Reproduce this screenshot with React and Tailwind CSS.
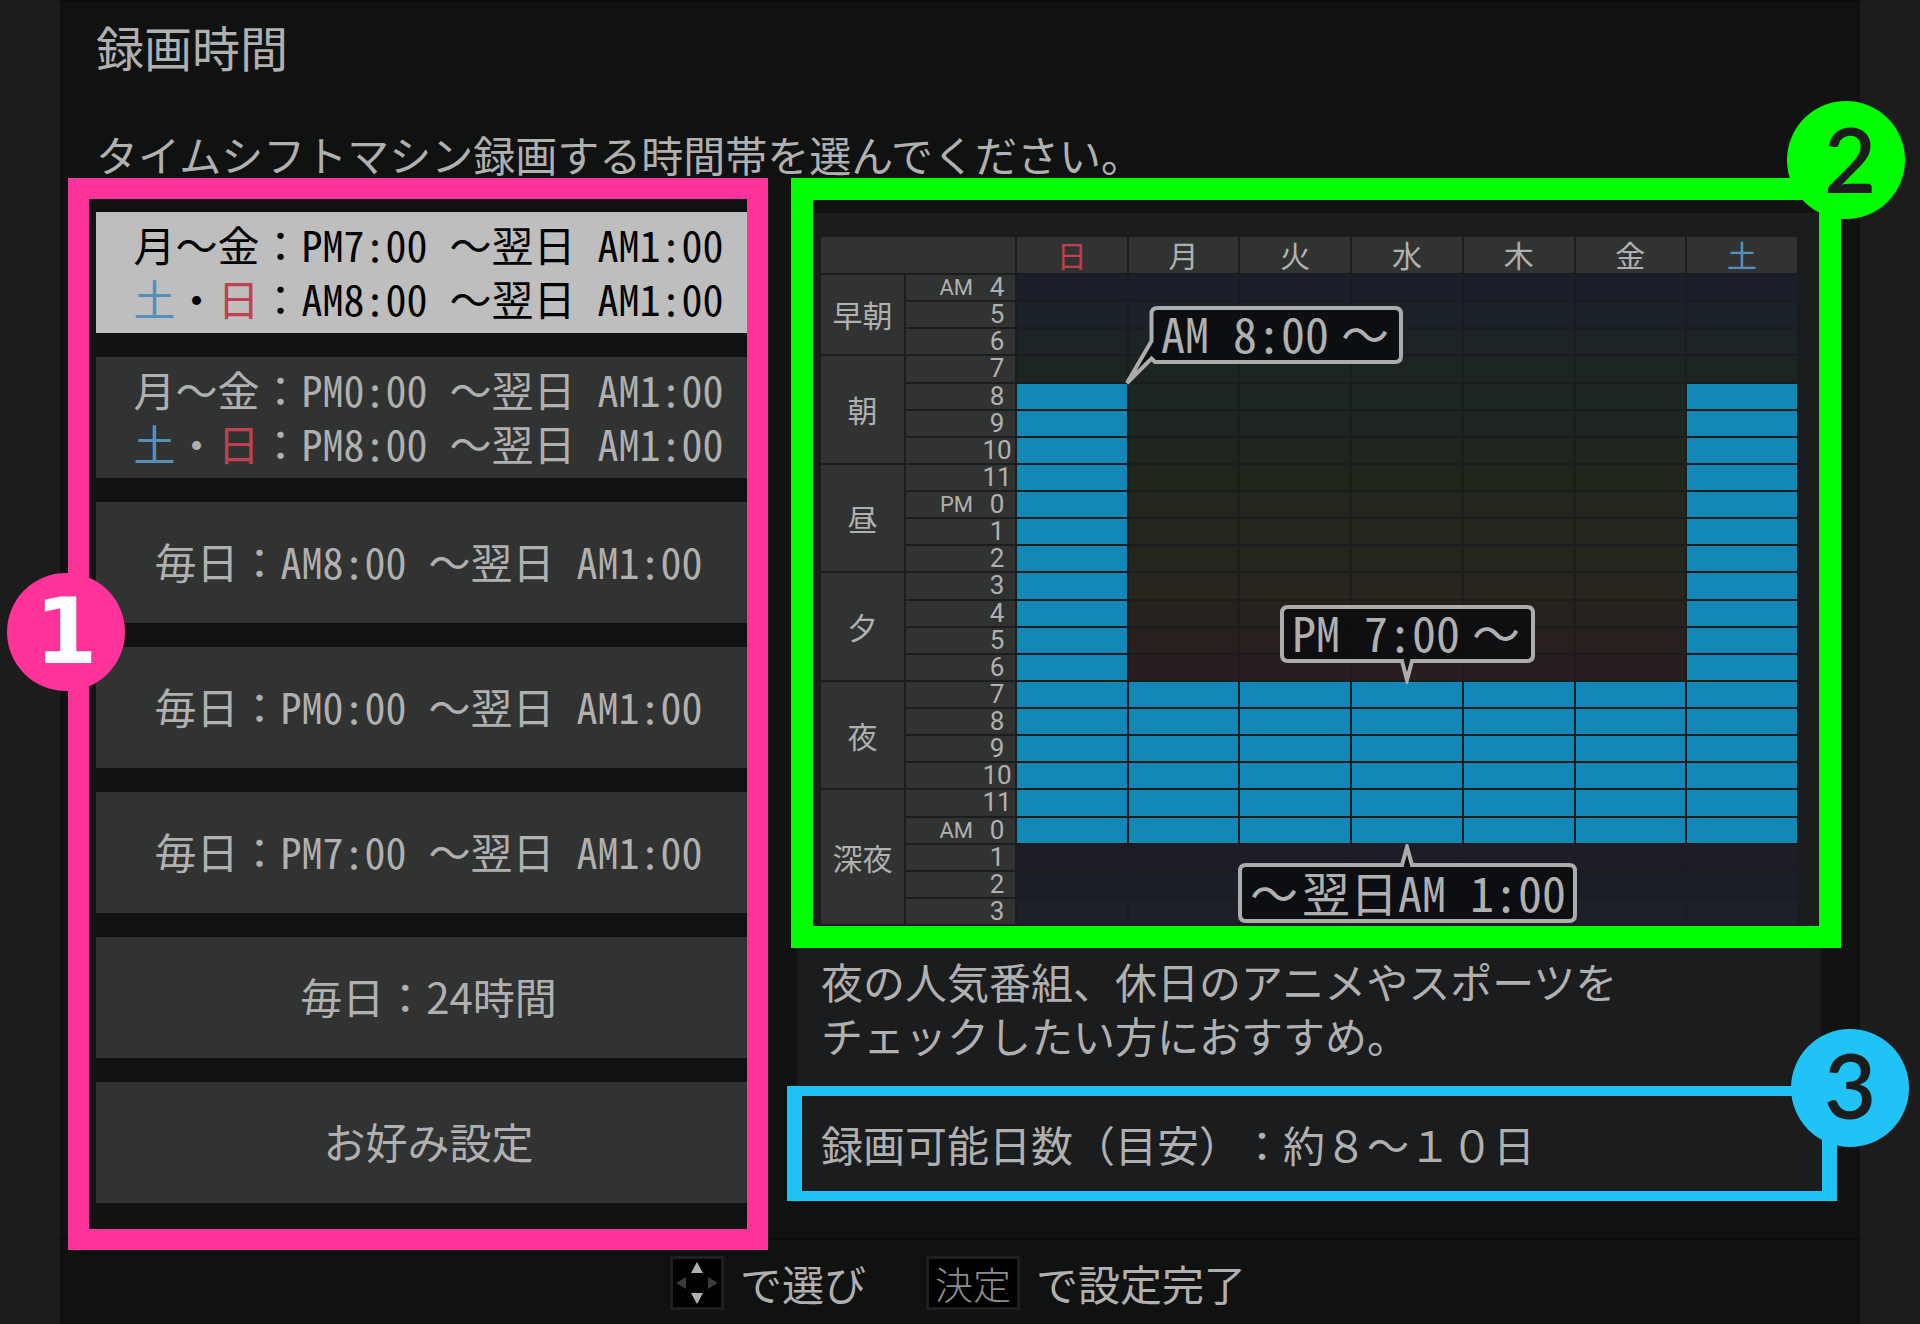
import React, { useState } from "react";

const days = [
  { label: "日", color: "text-[#c0404f]", weekend: true },
  { label: "月", color: "", weekend: false },
  { label: "火", color: "", weekend: false },
  { label: "水", color: "", weekend: false },
  { label: "木", color: "", weekend: false },
  { label: "金", color: "", weekend: false },
  { label: "土", color: "text-[#5590bb]", weekend: true },
];

const hours = [
  { hour: 4, half: "AM", period: "早朝", span: 3, bg: "bg-[#1c1f29]" },
  { hour: 5, bg: "bg-[#1c222a]" },
  { hour: 6, bg: "bg-[#1c2427]" },
  { hour: 7, period: "朝", span: 4, bg: "bg-[#1c2524]" },
  { hour: 8, bg: "bg-[#1d2623]" },
  { hour: 9, bg: "bg-[#1d2621]" },
  { hour: 10, bg: "bg-[#1f261e]" },
  { hour: 11, period: "昼", span: 4, bg: "bg-[#21261d]" },
  { hour: 0, half: "PM", bg: "bg-[#23261d]" },
  { hour: 1, bg: "bg-[#24251d]" },
  { hour: 2, bg: "bg-[#26251d]" },
  { hour: 3, period: "夕", span: 4, bg: "bg-[#28241e]" },
  { hour: 4, bg: "bg-[#28221e]" },
  { hour: 5, bg: "bg-[#281f1f]" },
  { hour: 6, bg: "bg-[#291e1f]" },
  { hour: 7, period: "夜", span: 4, bg: "bg-[#291e1f]" },
  { hour: 8, bg: "bg-[#291e1f]" },
  { hour: 9, bg: "bg-[#291e1f]" },
  { hour: 10, bg: "bg-[#291e1f]" },
  { hour: 11, period: "深夜", span: 5, bg: "bg-[#1c1d26]" },
  { hour: 0, half: "AM", bg: "bg-[#1c1d26]" },
  { hour: 1, bg: "bg-[#1c1d26]" },
  { hour: 2, bg: "bg-[#1c1e27]" },
  { hour: 3, bg: "bg-[#1c2028]" },
];

// row indexes that are recorded (last one included)
const WEEKEND_START = 4;
const WEEKDAY_START = 15;
const RECORD_END = 20;

const presets = [
  { id: "prime", split: true, weekday: "PM7:00", weekend: "AM8:00" },
  { id: "noon", split: true, weekday: "PM0:00", weekend: "PM8:00" },
  { id: "daily-am8", daily: "AM8:00" },
  { id: "daily-pm0", daily: "PM0:00" },
  { id: "daily-pm7", daily: "PM7:00" },
  { id: "daily-24", text: "毎日：24時間" },
  { id: "custom", text: "お好み設定" },
];

export default function App() {
  const [selected, setSelected] = useState("prime");

  return (
    <div className="min-h-screen bg-[#1c1c1c] px-[60px] font-['Noto_Sans_CJK_JP',sans-serif] text-[#b0b0b0] [text-spacing-trim:space-all]">
      <main className="flex min-h-screen flex-col border-t-2 border-[#0b0c0c] bg-[#101211]">
        <h1 className="pt-3 pl-9 text-[48px] leading-[64px]">録画時間</h1>
        <p className="pt-[52px] pl-9 text-[42px] leading-[48px]">
          タイムシフトマシン録画する時間帯を選んでください。
        </p>

        <div className="grid grid-cols-[2fr_3fr] items-start gap-[23px] pr-[19px] pl-2">
          {/* PRESET LIST */}
          <section className="relative z-10 flex flex-col gap-6 border-[21px] border-[#ff3399] pt-[13px] pb-[26px] pl-[7px]">
            {presets.map((preset) => (
              <PresetButton
                key={preset.id}
                preset={preset}
                active={selected === preset.id}
                onSelect={() => setSelected(preset.id)}
              />
            ))}
            <Badge className="top-[374px] -left-[82px] bg-[#ff3399] font-['DejaVu_Sans',sans-serif] font-bold text-white">
              1
            </Badge>
          </section>

          {/* PREVIEW */}
          <section>
            <div className="relative border-[22px] border-[#00ff00] pt-[13px]">
              <WeekTable />
              <Callouts />
              <Badge className="-top-[99px] -right-[86px] bg-[#00ff00] pb-1 pl-2 font-['Lato',sans-serif] font-semibold text-[#1c1c1c]">
                2
              </Badge>
            </div>

            <div className="mr-5 ml-1.5 h-[138px] bg-[#1b1c1d] pt-1.5 pl-6 text-[42px] leading-[54px]">
              <p>夜の人気番組、休日のアニメやスポーツを</p>
              <p>チェックしたい方におすすめ。</p>
            </div>

            <div className="relative mr-1 -ml-1 border-x-[15px] border-y-[10px] border-[#20c3f6] bg-[#1b1c1d] py-5 pl-[19px]">
              <p className="text-[42px] leading-[55px]">録画可能日数（目安）：約８〜１０日</p>
              <Badge className="-top-[67px] -right-[87px] bg-[#20c3f6] pb-2 font-['Lato',sans-serif] font-semibold text-[#1c1c1c]">
                3
              </Badge>
            </div>
          </section>
        </div>

        {/* KEY GUIDE */}
        <footer className="-mt-3 flex flex-1 items-start justify-center gap-[60px] border-t-2 border-[#0b0c0c] pt-4 pr-1 text-[42px] leading-[54px]">
          <div className="flex items-center gap-4">
            <ArrowKeys />
            <span>で選び</span>
          </div>
          <div className="flex items-center gap-4">
            <kbd className="flex h-[54px] items-center border-[3px] border-[#1e1f1f] bg-black px-1.5 font-['Noto_Sans_CJK_JP',sans-serif] text-[38px] font-light text-[#8c8c8c]">
              決定
            </kbd>
            <span>で設定完了</span>
          </div>
        </footer>
      </main>
    </div>
  );
}

function PresetButton({ preset, active, onSelect }) {
  return (
    <button
      type="button"
      aria-pressed={active}
      onClick={onSelect}
      className={`flex h-[121px] flex-col items-center justify-center pb-1 pl-[14px] text-[42px] leading-[54px] whitespace-nowrap ${
        active ? "bg-[#bebebe] text-black" : "bg-[#313332]"
      }`}
    >
      {preset.split && (
        <>
          <span className="flex">
            月〜金：
            <TimeRange from={preset.weekday} />
          </span>
          <span className="flex">
            <span className="text-[#5590bb]">土</span>・<span className="text-[#c0404f]">日</span>：
            <TimeRange from={preset.weekend} />
          </span>
        </>
      )}
      {preset.daily && (
        <span className="flex">
          毎日：
          <TimeRange from={preset.daily} />
        </span>
      )}
      {preset.text}
    </button>
  );
}

function TimeRange({ from }) {
  return (
    <span className="flex gap-[22px]">
      <HalfWidth>{from}</HalfWidth>
      <span>〜翌日</span>
      <HalfWidth>AM1:00</HalfWidth>
    </span>
  );
}

// latin letters and digits take half of a kanji cell
function HalfWidth({ children }) {
  return (
    <span className="font-['Noto_Sans_Mono_CJK_JP','Noto_Sans_CJK_JP',sans-serif] [font-feature-settings:'hwid']">
      {children}
    </span>
  );
}

function Badge({ className, children }) {
  return (
    <span
      className={`absolute z-20 flex size-[118px] items-center justify-center rounded-full text-[90px] leading-[110px] ${className}`}
    >
      {children}
    </span>
  );
}

function WeekTable() {
  return (
    <div className="bg-[#1b1c1d] pt-[22px] pr-5 pl-1.5">
      <table className="h-[691px] w-full table-fixed border-separate border-spacing-[2px] text-[30px]">
        <colgroup>
          <col className="w-[83px]" />
          <col className="w-[109px]" />
          {days.map((day) => (
            <col key={day.label} />
          ))}
        </colgroup>
        <thead>
          <tr className="h-9">
            <td colSpan={2} className="bg-[#313332] p-0"></td>
            {days.map((day) => (
              <th
                key={day.label}
                scope="col"
                className={`bg-[#313332] p-0 pb-0.5 leading-[32px] font-normal ${day.color}`}
              >
                {day.label}
              </th>
            ))}
          </tr>
        </thead>
        <tbody>
          {hours.map((row, index) => (
            <tr key={index}>
              {row.period && (
                <th scope="rowgroup" rowSpan={row.span} className="bg-[#313332] p-0 font-normal">
                  {row.period}
                </th>
              )}
              <th scope="row" className="bg-[#313332] p-0 font-normal">
                <div className="flex items-center justify-end font-['Roboto',sans-serif] text-[26px] leading-[25px]">
                  {row.half && <span className="mr-1.5 text-[22px]">{row.half}</span>}
                  <span className="w-9 text-center">{row.hour}</span>
                </div>
              </th>
              {days.map((day) => {
                const start = day.weekend ? WEEKEND_START : WEEKDAY_START;
                const recorded = index >= start && index <= RECORD_END;
                return (
                  <td key={day.label} className={`p-0 ${recorded ? "bg-[#1388b7]" : row.bg}`}></td>
                );
              })}
            </tr>
          ))}
        </tbody>
      </table>
    </div>
  );
}

/* Speech bubbles that lie over the week table */
function Callouts() {
  return (
    <div className="text-[48px] leading-[52px] whitespace-nowrap">
      <div className="absolute top-[106px] left-[312px] flex h-[52px] w-[279px] items-center pl-9">
        <Bubble
          className="h-[80px] w-[280px]"
          d="M26.5 35V8q0-6 6-6H270q6 0 6 6V50q0 6-6 6H30L26.5 52.5L2 77Z"
        />
        <span className="relative flex gap-6">
          <HalfWidth>AM</HalfWidth>
          <HalfWidth>8:00</HalfWidth>
        </span>
        <span className="relative ml-3">〜</span>
      </div>

      <div className="absolute top-[404px] left-[467px] flex h-[54px] w-[255px] items-center pl-3">
        <Bubble
          className="h-[80px] w-[256px]"
          d="M8 3H247q6 0 6 6V51q0 6-6 6H132L127 76L122 57H8q-6 0-6-6V9q0-6 6-6Z"
        />
        <span className="relative flex gap-6">
          <HalfWidth>PM</HalfWidth>
          <HalfWidth>7:00</HalfWidth>
        </span>
        <span className="relative ml-3">〜</span>
      </div>

      <div className="absolute top-[644px] left-[425px] flex h-[74px] w-[340px] items-center pt-5 pl-3">
        <Bubble
          className="h-[80px] w-[340px]"
          d="M8 21H164L169 3L174 21H331q6 0 6 6V71q0 6-6 6H8q-6 0-6-6V27q0-6 6-6Z"
        />
        <span className="relative mr-1">〜</span>
        <span className="relative">翌日</span>
        <span className="relative flex gap-6">
          <HalfWidth>AM</HalfWidth>
          <HalfWidth>1:00</HalfWidth>
        </span>
      </div>
    </div>
  );
}

function Bubble({ className, d }) {
  return (
    <svg className={`absolute top-0 left-0 ${className}`} aria-hidden="true">
      <path d={d} fill="#090a0c" fillOpacity="0.8" stroke="#acacac" strokeWidth="4" />
    </svg>
  );
}

function ArrowKeys() {
  return (
    <svg width="54" height="54" viewBox="0 0 54 54" role="img" aria-label="上下">
      <rect x="1.5" y="1.5" width="51" height="51" fill="#000" stroke="#1e1f1f" strokeWidth="3" />
      <path d="M27 6L33 17H21ZM27 48L33 37H21Z" fill="#b0b0b0" />
      <path d="M6 27L16 21V33ZM48 27L38 21V33Z" fill="#3a3b3b" />
    </svg>
  );
}
